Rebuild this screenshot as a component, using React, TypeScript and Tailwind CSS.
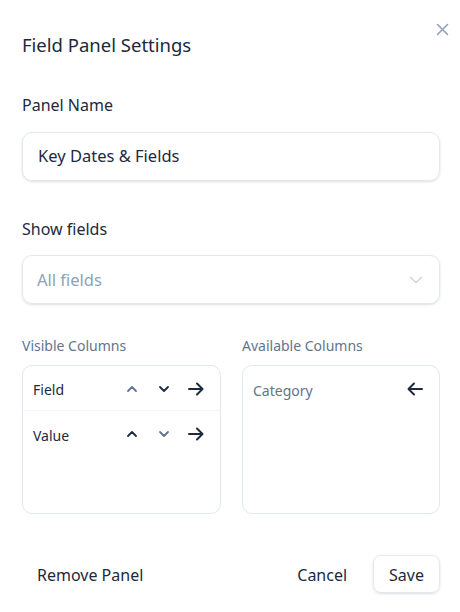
const font = { fontFamily: '"Noto Sans", "Open Sans", sans-serif' };

function ChevronUp({ muted }: { muted?: boolean }) {
  return (
    <svg width="12" height="8" viewBox="0 0 12 8" fill="none" className={muted ? "text-slate-500" : "text-slate-800"}>
      <path d="M2 6 L6 2 L10 6" stroke="currentColor" strokeWidth="1.8" strokeLinecap="round" strokeLinejoin="round" />
    </svg>
  );
}

function ChevronDown({ muted }: { muted?: boolean }) {
  return (
    <svg width="12" height="8" viewBox="0 0 12 8" fill="none" className={muted ? "text-slate-500" : "text-slate-800"}>
      <path d="M2 2 L6 6 L10 2" stroke="currentColor" strokeWidth="1.8" strokeLinecap="round" strokeLinejoin="round" />
    </svg>
  );
}

function Arrow({ left }: { left?: boolean }) {
  return (
    <svg width="16" height="14" viewBox="0 0 16 14" fill="none" className="text-slate-800">
      {left ? (
        <path d="M15 7 H2 M7 1.5 L1.5 7 L7 12.5" stroke="currentColor" strokeWidth="2" strokeLinecap="round" strokeLinejoin="round" />
      ) : (
        <path d="M1 7 H14 M9 1.5 L14.5 7 L9 12.5" stroke="currentColor" strokeWidth="2" strokeLinecap="round" strokeLinejoin="round" />
      )}
    </svg>
  );
}

function ColumnRow({ name, first, last }: { name: string; first?: boolean; last?: boolean }) {
  return (
    <div className={`flex h-[45px] items-center pl-[10px] pr-[8px] ${last ? "" : "border-b border-slate-100"}`}>
      <span className="flex-1 pt-[3px] text-[14px] text-slate-800">{name}</span>
      <button className="flex h-[32px] w-[32px] items-center justify-center pt-[1px]">
        <ChevronUp muted={first} />
      </button>
      <button className="flex h-[32px] w-[32px] items-center justify-center pt-[1px]">
        <ChevronDown muted={last} />
      </button>
      <button className="flex h-[32px] w-[32px] items-center justify-center pt-[1px]">
        <Arrow />
      </button>
    </div>
  );
}

export default function App() {
  return (
    <div className="relative h-[612px] w-[460px] bg-white pl-[22px] pr-[20px] pt-[31px] text-slate-800" style={font}>
      <button className="absolute right-[7px] top-[18px] flex h-[22px] w-[22px] items-center justify-center text-slate-400">
        <svg width="13" height="13" viewBox="0 0 13 13" fill="none">
          <path d="M1.5 1.5 L11.5 11.5 M11.5 1.5 L1.5 11.5" stroke="currentColor" strokeWidth="1.6" strokeLinecap="round" />
        </svg>
      </button>

      <h2 className="text-[18.5px] leading-[28px]">Field Panel Settings</h2>

      <div className="mt-[34px] text-[16px] leading-[24px]">Panel Name</div>
      <div className="mt-[15px] flex h-[49px] items-center rounded-[10px] border border-slate-200 px-[15px] text-[16.5px] shadow-sm">
        Key Dates &amp; Fields
      </div>

      <div className="mt-[36px] text-[16px] leading-[24px]">Show fields</div>
      <div className="mt-[14px] flex h-[49px] items-center justify-between rounded-[10px] border border-slate-200 pl-[14px] pr-[16px] text-[16.5px] text-slate-400 shadow-sm">
        <span className="pt-[1px]">All fields</span>
        <svg width="14" height="8" viewBox="0 0 14 8" fill="none" className="text-slate-300">
          <path d="M1.5 1.5 L7 6.5 L12.5 1.5" stroke="currentColor" strokeWidth="1.5" strokeLinecap="round" strokeLinejoin="round" />
        </svg>
      </div>

      <div className="mt-[32px] grid grid-cols-[199px_198px] gap-x-[21px]">
        <div>
          <div className="text-[14px] leading-[20px] text-slate-500">Visible Columns</div>
          <div className="mt-[9px] h-[149px] rounded-[10px] border border-slate-200">
            <ColumnRow name="Field" first />
            <ColumnRow name="Value" last />
          </div>
        </div>
        <div>
          <div className="text-[14px] leading-[20px] text-slate-500">Available Columns</div>
          <div className="mt-[9px] h-[149px] rounded-[10px] border border-slate-200">
            <div className="flex h-[45px] items-center pl-[10px] pr-[8px]">
              <span className="flex-1 pt-[3px] text-[14px] text-slate-500">Category</span>
              <button className="flex h-[32px] w-[32px] items-center justify-center pt-[1px]">
                <Arrow left />
              </button>
            </div>
          </div>
        </div>
      </div>

      <div className="mt-[41px] flex items-center">
        <button className="h-[38px] px-[15px] pt-[1px] text-[16px]">Remove Panel</button>
        <div className="flex-1" />
        <button className="h-[38px] px-[15px] pt-[1px] text-[16px]">Cancel</button>
        <button className="ml-[11px] h-[38px] rounded-[8px] border border-slate-200 px-[15px] pt-[1px] text-[16px] shadow-sm">Save</button>
      </div>
    </div>
  );
}
